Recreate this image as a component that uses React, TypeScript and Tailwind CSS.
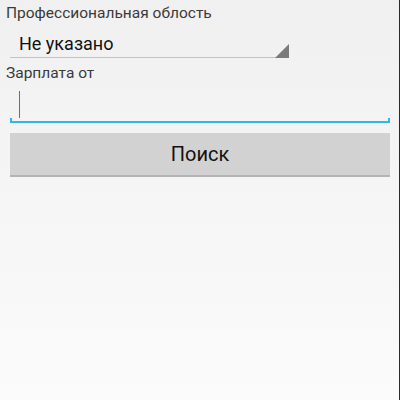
export default function App() {
  return (
    <div
      className="relative h-[400px] w-[400px] overflow-hidden bg-gradient-to-b from-[#f0f0f0] to-[#fbfbfb] text-left"
      style={{ fontFamily: "Roboto, 'Noto Sans', sans-serif" }}
    >
      <div className="flex flex-col">
        <div className="pl-[6px] pt-[3px] text-[15.5px] leading-[20px] text-[#3a3a3a]">
          Профессиональная облость
        </div>

        {/* spinner */}
        <div className="relative ml-[10px] mt-[9px] h-[26px] w-[279px] border-b border-[#c4c4c4]">
          <div className="pl-[9px] text-[18px] leading-[24px] text-[#111]">Не указано</div>
          <svg className="absolute bottom-[-1px] right-0" width="14" height="14" viewBox="0 0 14 14">
            <polygon points="0,14 14,0 14,14" fill="#7b7b7b" />
          </svg>
        </div>

        <div className="pl-[6px] pt-[5px] text-[15.5px] leading-[20px] text-[#3a3a3a]">
          Зарплата от
        </div>

        {/* edit text */}
        <div className="relative ml-[10px] mt-[7px] h-[33px] w-[380px]">
          <div className="absolute left-[9px] top-[1px] h-[27px] w-[1px] bg-[#6e6e6e]" />
          <div className="absolute bottom-0 left-0 h-[2px] w-full bg-[#33b5e5]" />
          <div className="absolute bottom-0 left-0 h-[5px] w-[2px] bg-[#33b5e5]" />
          <div className="absolute bottom-0 right-0 h-[5px] w-[2px] bg-[#33b5e5]" />
        </div>

        {/* button */}
        <button className="ml-[10px] mt-[10px] flex h-[44px] w-[380px] items-center justify-center border-b-2 border-[#b4b4b4] bg-[#d2d2d2] text-[20px] text-[#111]">
          Поиск
        </button>
      </div>
      <div className="absolute right-0 top-0 h-full w-[1px] bg-[#2a2a2a]" />
    </div>
  );
}
